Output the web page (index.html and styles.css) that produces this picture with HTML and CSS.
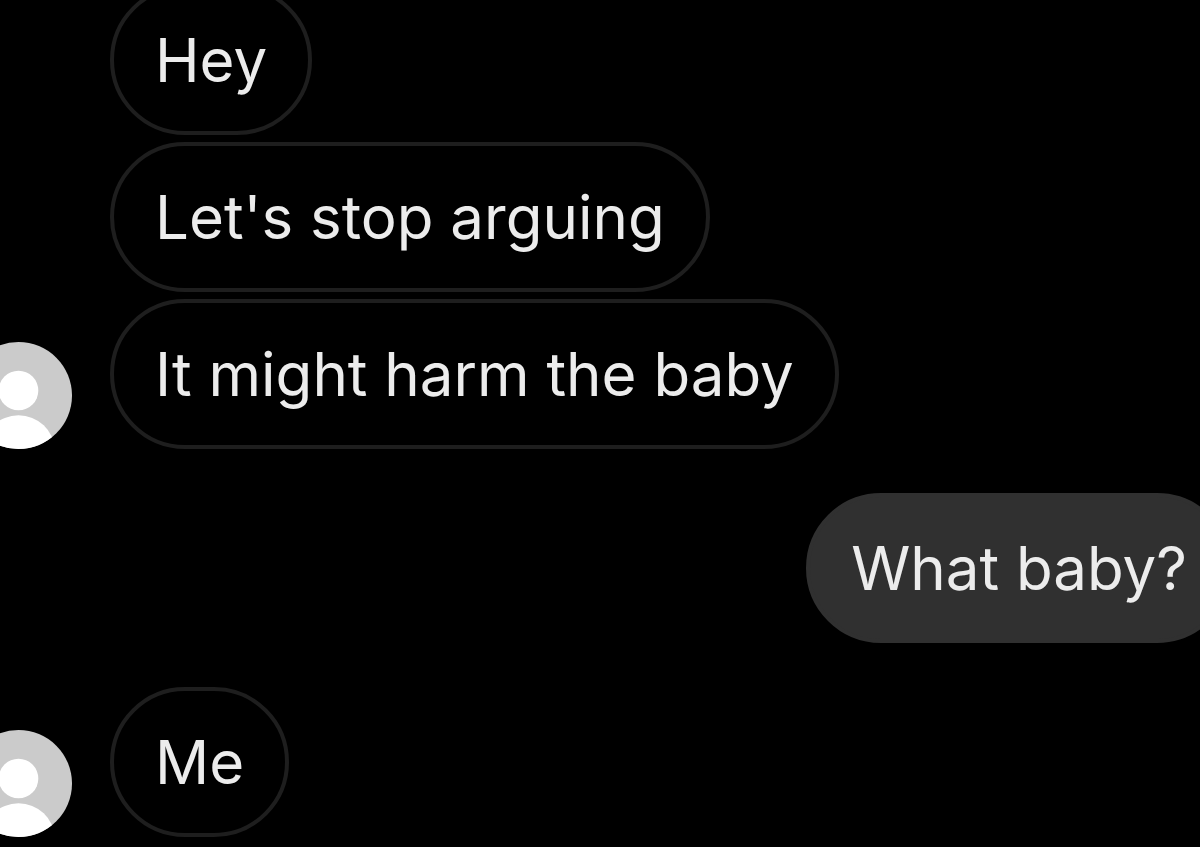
FILE: index.html
```html
<!DOCTYPE html>
<html lang="en">
  <head>
    <meta charset="utf-8">
    <title>Messages</title>
    <link rel="stylesheet" href="styles.css">
  </head>
  <body>
    <main class="chat">
      <section class="group received">
        <svg class="avatar" viewBox="0 0 108 108" role="img" aria-label="Profile picture">
          <clipPath id="avatar-clip">
            <circle cx="54" cy="54" r="54"/>
          </clipPath>
          <g clip-path="url(#avatar-clip)">
            <rect width="108" height="108" fill="#cbcbcb"/>
            <circle cx="54" cy="49" r="20" fill="#fff"/>
            <ellipse cx="54" cy="108" rx="36" ry="34" fill="#fff"/>
          </g>
        </svg>
        <div class="messages">
          <p class="bubble">Hey</p>
          <p class="bubble">Let's stop arguing</p>
          <p class="bubble">It might harm the baby</p>
        </div>
      </section>
      <section class="group sent">
        <p class="bubble">What baby?</p>
      </section>
      <section class="group received">
        <svg class="avatar" viewBox="0 0 108 108" role="img" aria-label="Profile picture">
          <g clip-path="url(#avatar-clip)">
            <rect width="108" height="108" fill="#cbcbcb"/>
            <circle cx="54" cy="49" r="20" fill="#fff"/>
            <ellipse cx="54" cy="108" rx="36" ry="34" fill="#fff"/>
          </g>
        </svg>
        <div class="messages">
          <p class="bubble">Me</p>
        </div>
      </section>
    </main>
  </body>
</html>
```

FILE: styles.css
```css
:root {
  --background-color: #000;
  --border-color: #1e1e1e;
  --sent-color: #303030;
  --text-color: #ececec;
}

body {
  background-color: var(--background-color);
  color: var(--text-color);
  font-family: Inter, "Liberation Sans", sans-serif;
  font-size: 60px;
  line-height: 72px;
  margin: 0;
  overflow: hidden;
}

/* the thread runs past the top and both sides of the window */
.chat {
  display: flex;
  flex-direction: column;
  gap: 44px;
  margin: -15px -32px 0 -35px;
}

.group {
  display: flex;
  align-items: flex-end;
  gap: 38px;
}

.sent {
  justify-content: flex-end;
}

.messages {
  display: flex;
  flex-direction: column;
  align-items: flex-start;
  gap: 7px;
}

.avatar {
  width: 107px;
  height: 107px;
  flex-shrink: 0;
}

.bubble {
  margin: 0;
  padding: 35px 41px;
  border: 4px solid var(--border-color);
  border-radius: 75px;
  white-space: nowrap;
}

.sent .bubble {
  background-color: var(--sent-color);
  border-color: var(--sent-color);
}
```
